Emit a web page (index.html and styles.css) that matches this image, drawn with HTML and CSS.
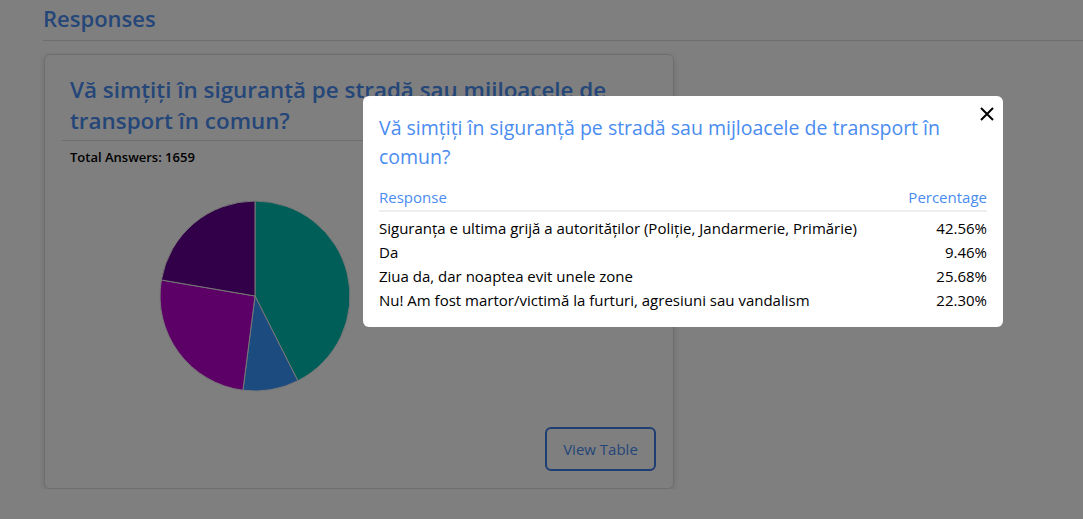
FILE: index.html
```html
<!DOCTYPE html>
<html lang="ro">
<head>
    <meta charset="UTF-8">
    <title>Responses</title>
    <link rel="stylesheet" href="styles.css">
</head>
<body>

    <!-- Page -->
    <div class="page">
        <h2 class="page-title">Responses</h2>

        <div class="card">
            <h3 class="card-title">Vă simțiți în siguranță pe stradă sau mijloacele de transport în comun?</h3>
            <div class="total">Total Answers: 1659</div>

            <div class="chart">
                <svg width="192" height="192" viewBox="-96 -96 192 192">
                    <path d="M0 0 L0 -95 A95 95 0 0 1 42.84 84.80 Z" fill="#00bcb0" stroke="#eee" stroke-width="1"/>
                    <path d="M0 0 L42.84 84.80 A95 95 0 0 1 -12.07 94.23 Z" fill="#3898ff" stroke="#eee" stroke-width="1"/>
                    <path d="M0 0 L-12.07 94.23 A95 95 0 0 1 -93.64 -16.01 Z" fill="#b800d0" stroke="#eee" stroke-width="1"/>
                    <path d="M0 0 L-93.64 -16.01 A95 95 0 0 1 0 -95 Z" fill="#640090" stroke="#eee" stroke-width="1"/>
                </svg>
            </div>

            <div class="card-footer">
                <button class="btn-outline">View Table</button>
            </div>
        </div>
    </div>

    <!-- Modal -->
    <div class="overlay">
        <div class="modal">
            <button class="close" aria-label="Close">
                <svg width="14" height="14" viewBox="0 0 14 14"><path d="M1 1 L13 13 M13 1 L1 13" stroke="#000" stroke-width="2"/></svg>
            </button>
            <h3 class="modal-title">Vă simțiți în siguranță pe stradă sau mijloacele de transport în comun?</h3>
            <table class="answers">
                <thead>
                    <tr><th>Response</th><th class="num">Percentage</th></tr>
                </thead>
                <tbody>
                    <tr><td>Siguranța e ultima grijă a autorităților (Poliție, Jandarmerie, Primărie)</td><td class="num">42.56%</td></tr>
                    <tr><td>Da</td><td class="num">9.46%</td></tr>
                    <tr><td>Ziua da, dar noaptea evit unele zone</td><td class="num">25.68%</td></tr>
                    <tr><td>Nu! Am fost martor/victimă la furturi, agresiuni sau vandalism</td><td class="num">22.30%</td></tr>
                </tbody>
            </table>
        </div>
    </div>

</body>
</html>
```

FILE: styles.css
```css
/* General */
body {
    font-family: 'Open Sans', 'Noto Sans', sans-serif;
    background-color: #fff;
    color: #000;
    margin: 0;
    padding: 0;
}

.page {
    padding: 0 0 0 43px;
}

.page-title {
    margin: 0;
    padding-top: 3px;
    height: 37px;
    font-size: 22px;
    font-weight: 600;
    color: #4a8cf0;
    border-bottom: 1px solid #ddd;
}

/* Card */
.card {
    width: 594px;
    margin: 13px 0 0 1px;
    padding: 19px 17px 17px;
    background: #fff;
    border: 1px solid #ddd;
    border-radius: 6px;
    box-shadow: 0 2px 6px rgba(0, 0, 0, 0.15);
}

.card-title {
    margin: 0;
    padding: 0 8px 4px;
    font-size: 22.4px;
    line-height: 31px;
    font-weight: 600;
    color: #4a8cf0;
    border-bottom: 1px solid #ddd;
}

.total {
    padding: 7px 8px 0;
    font-size: 13px;
    font-weight: 600;
}

.chart {
    display: flex;
    padding: 34px 0 0 97px;
    height: 212px;
}

.card-footer {
    display: flex;
    justify-content: flex-end;
    padding-top: 15px;
}

.btn-outline {
    font-family: inherit;
    font-size: 15px;
    color: #4a8cf0;
    background: #fff;
    border: 2px solid #3b7ae6;
    border-radius: 6px;
    padding: 0 16px;
    height: 44px;
    width: 111px;
}

/* Modal */
.overlay {
    position: fixed;
    inset: 0;
    background: rgba(0, 0, 0, 0.5);
}

.modal {
    position: absolute;
    left: 363px;
    top: 96px;
    width: 608px;
    padding: 17px 16px 15px;
    background: #fff;
    border-radius: 6px;
}

.close {
    position: absolute;
    top: 9px;
    right: 7px;
    border: none;
    background: none;
    padding: 2px;
    cursor: pointer;
}

.modal-title {
    margin: 0 20px 16px 0;
    font-size: 19.5px;
    line-height: 29px;
    font-weight: 400;
    color: #4a8cf0;
}

.answers {
    width: 100%;
    border-collapse: collapse;
    font-size: 15px;
}

.answers th {
    text-align: left;
    font-weight: 500;
    color: #4a8cf0;
    padding: 0 0 3px;
    border-bottom: 2px solid #eee;
}

.answers td {
    padding: 0;
    height: 24px;
}

.answers tbody tr:first-child td {
    padding-top: 4px;
}

.answers .num {
    text-align: right;
}
```
